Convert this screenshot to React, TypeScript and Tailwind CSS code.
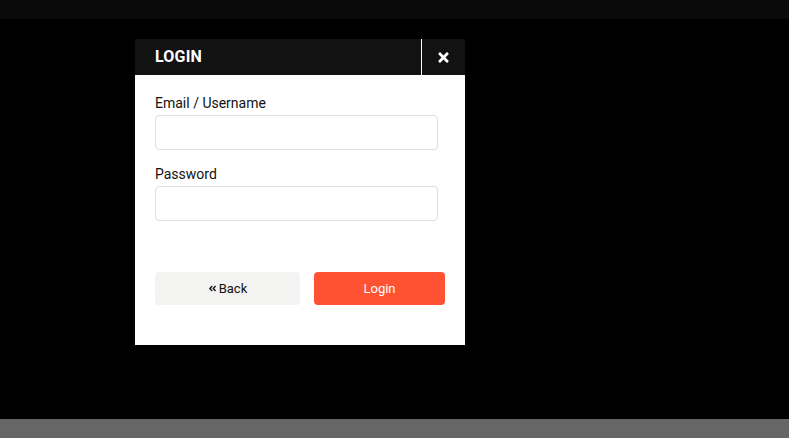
import React from "react";
import { FaTimes, FaAngleDoubleLeft } from "react-icons/fa";

const LoginModal: React.FC = () => {
  return (
    <div className="w-[330px] bg-white">
      {/* Header */}
      <div className="h-9 bg-[#121212] flex items-stretch">
        <div className="flex-1 flex items-center pl-5">
          <h3 className="text-white text-[16px] font-bold tracking-[0.2px]">LOGIN</h3>
        </div>
        <button className="w-[44px] border-l border-white flex items-center justify-center text-white">
          <FaTimes className="text-[15px]" />
        </button>
      </div>

      {/* Body */}
      <div className="pl-5 pr-[27px] pt-[18px] pb-10">
        <label className="block h-5 leading-5 text-[14px] text-[#111] mb-[2px]">
          Email / Username
        </label>
        <input
          type="text"
          className="block w-full h-[35px] border border-[#dedede] rounded-[4px] outline-none px-2"
        />

        <label className="block h-5 leading-5 text-[14px] text-[#111] mt-[14px] mb-[2px]">
          Password
        </label>
        <input
          type="password"
          className="block w-full h-[35px] border border-[#dedede] rounded-[4px] outline-none px-2"
        />

        <div className="flex gap-[14px] mt-[51px]">
          <button className="w-[145px] h-[33px] shrink-0 rounded-[4px] bg-[#f3f3f2] text-[#111] text-[13px] flex items-center justify-center gap-[2px]">
            <FaAngleDoubleLeft className="text-[9px]" />
            Back
          </button>
          <button className="w-[131px] h-[33px] shrink-0 rounded-[4px] bg-[#ff5232] text-white text-[13px] flex items-center justify-center">
            Login
          </button>
        </div>
      </div>
    </div>
  );
};

export default function App() {
  return (
    <div className="h-[438px] w-full flex flex-col bg-black font-['Roboto',sans-serif]">
      <div className="h-[19px] bg-[#0a0a0a]" />
      <div className="flex-1 pt-5 pl-[135px]">
        <LoginModal />
      </div>
      <div className="h-[19px] bg-[#666666]" />
    </div>
  );
}
